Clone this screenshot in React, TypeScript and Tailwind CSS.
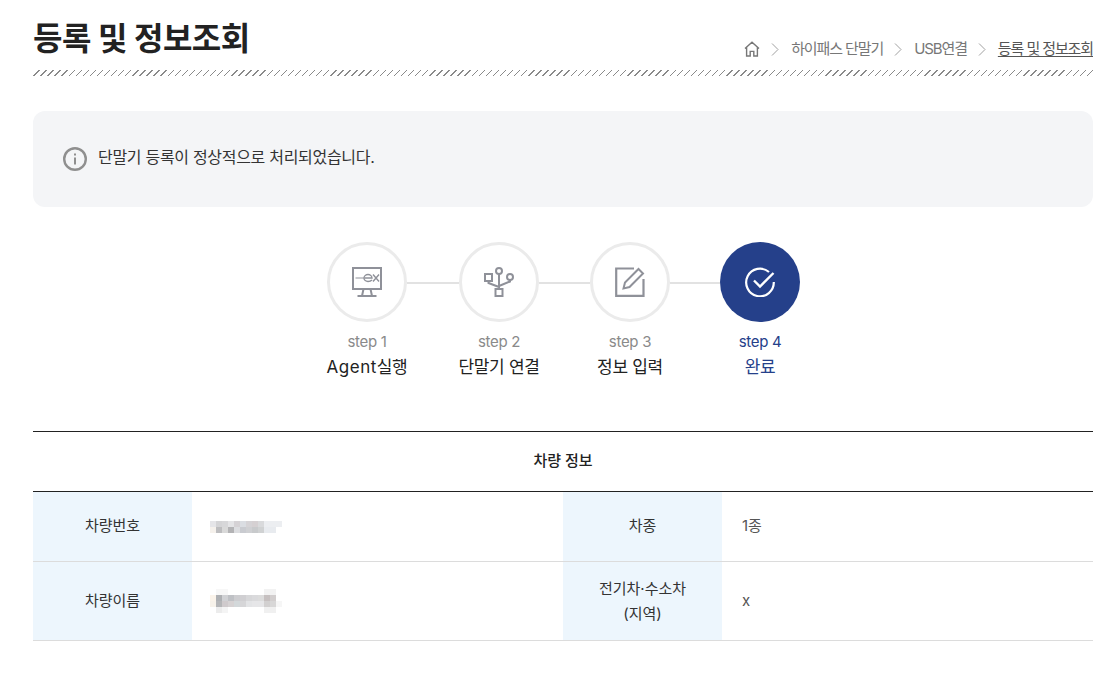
import type { ReactNode } from 'react'

const font = "font-['Inter','Noto_Sans_CJK_KR',sans-serif]"

function HomeIcon() {
  return (
    <svg width="16" height="16" viewBox="0 0 16 16" fill="none" stroke="#777" strokeWidth="1.4">
      <path d="M1 7.500 8 1.200l7 6.300M2.600 6.500V15h3.600v-4.600h3.600V15h3.600V6.500" />
    </svg>
  )
}

function Sep() {
  return (
    <svg width="8" height="13" viewBox="0 0 8 13" fill="none" stroke="#a0a0a0" strokeWidth="1" className="mx-[11px] mr-[12px]">
      <path d="M1 .5l6 6-6 6" />
    </svg>
  )
}

function InfoIcon() {
  return (
    <svg width="24" height="24" viewBox="0 0 24 24" fill="none">
      <circle cx="12" cy="12" r="10.800" stroke="#8f8f8f" strokeWidth="2.400" />
      <rect x="11" y="10.500" width="2" height="7" fill="#8f8f8f" />
      <rect x="11" y="6.500" width="2" height="2" fill="#8f8f8f" />
    </svg>
  )
}

function AgentIcon() {
  return (
    <svg width="30" height="30" viewBox="0 0 30 30" fill="none" stroke="#8f9199" strokeWidth="2">
      <rect x="1" y="1" width="28" height="21" />
      <path d="M10 29l1.500-7M20 29l-1.500-7M5.500 29h19" />
      <path d="M3.500 11H13" strokeWidth="1" />
      <path d="M13 11h7c0-2-2-3.500-4-3.500S12 9 12 11s2 3.500 4 3.500 3-.5 4-1.500M21 7.500l6 7M27 7.500l-6 7" strokeWidth="1.400" />
    </svg>
  )
}

function UsbIcon() {
  return (
    <svg width="30" height="30" viewBox="0 0 30 30" fill="none" stroke="#8f9199" strokeWidth="2">
      <circle cx="15" cy="4" r="3" />
      <circle cx="26" cy="10" r="3" />
      <rect x="1" y="7" width="7" height="7" />
      <rect x="11.500" y="22" width="7" height="7" />
      <path d="M15 7v15M4.500 14v2l10.500 4M26 13v1.500L15 19" />
    </svg>
  )
}

function EditIcon() {
  return (
    <svg width="30" height="30" viewBox="0 0 30 30" fill="none" stroke="#8f9199" strokeWidth="2.200">
      <path d="M19 1.500H1.200v27.300h27.300V12" />
      <path d="M8.500 21.500l1.500-6L23.500 2l4.500 4.500L14.500 20z" strokeWidth="2" />
    </svg>
  )
}

function CheckIcon() {
  return (
    <svg width="30" height="30" viewBox="0 0 30 30" fill="none" stroke="#fff" strokeWidth="2.200">
      <path d="M24 5A13.800 13.800 0 1 0 28.800 15" />
      <path d="M9 13.500l6 6L28.500 6" strokeWidth="2.400" />
    </svg>
  )
}

function Step({ icon, step, label, active }: { icon: ReactNode; step: string; label: ReactNode; active?: boolean }) {
  return (
    <div className="w-20 flex flex-col items-center">
      <div className={`w-20 h-20 rounded-full flex items-center justify-center ${active ? 'bg-[#25408a]' : 'bg-white border-[3px] border-[#ebebeb]'}`}>
        {icon}
      </div>
      <div className={`mt-2.5 text-[15px] leading-5 tracking-[-0.3px] whitespace-nowrap ${active ? 'text-[#25408a]' : 'text-[#8a8a8a]'}`}>{step}</div>
      <div className={`mt-[3px] text-[17px] leading-6 tracking-[-0.3px] whitespace-nowrap ${active ? 'text-[#25408a]' : 'text-[#222]'}`}>{label}</div>
    </div>
  )
}

function Line({ width }: { width: string }) {
  return <div className={`${width} h-0.5 mt-10 bg-[#e2e2e2]`} />
}

function Blur({ cells }: { cells: string[] }) {
  return (
    <div className="flex flex-col">
      {cells.map((row, i) => (
        <div key={i} className="flex">
          {row.split(' ').map((c, j) => (
            <div key={j} className="w-1.5 h-1.5" style={{ backgroundColor: c }} />
          ))}
        </div>
      ))}
    </div>
  )
}

const plateBlur = [
  '#e5e5e8 #d4d4d6 #d7d7d9 #e4e4e6 #d5d2d5 #dadde2 #d5d3d6 #d5d0d2 #d9dadc #eceef1 #eceef1 #eceef1',
  '#f5f1ec #bdbdbf #d9d9d9 #b3b3b5 #dcdde0 #c9cbd0 #cfd0d3 #c8cacc #d0d2d3 #e8ebef #e8ebef #ffffff',
]

const nameBlur = [
  '#ffffff #f7f7f7 #f7f7f7 #ffffff #ffffff #ffffff #ffffff #ffffff #ffffff #f2f2f2 #f2f2f2 #ffffff',
  '#faf3ea #aeb0b3 #d0d1d4 #bfc1c5 #cdcdd0 #d0cfd2 #d7d7d9 #dadadc #dcdcdc #c6c0c0 #d2cece #ffffff',
  '#f7f2ea #b5b6b8 #cfcacc #d6d2d3 #d3d8da #d6d6d8 #e3e4e6 #e6e6e8 #e6e6e8 #d2d0d0 #d8d7d7 #f6f6f6',
  '#ffffff #ececec #f4f4f4 #ffffff #ffffff #ffffff #ffffff #ffffff #ffffff #f0f0f0 #f0f0f0 #ffffff',
]

export default function App() {
  return (
    <div className={`${font} w-[1113px] h-[674px] bg-white overflow-hidden pl-[33px] pr-5 pt-4 text-[#333]`}>
      {/* 페이지 타이틀 */}
      <div className="flex items-end justify-between h-[46px]">
        <h1 className="text-[32px] leading-[46px] font-bold text-[#222] tracking-[-0.5px]">등록 및 정보조회</h1>
        <div className="flex items-center h-6 mb-px text-[15px] tracking-[-1.1px] text-[#777]">
          <HomeIcon />
          <Sep />
          <span>하이패스 단말기</span>
          <Sep />
          <span>USB연결</span>
          <Sep />
          <span className="underline underline-offset-2 text-[#555]">등록 및 정보조회</span>
        </div>
      </div>
      <div className="mt-2 h-1.5 bg-[repeating-linear-gradient(135deg,#fff_0,#fff_4px,#8a8a8a_4px,#8a8a8a_5px)]" />

      {/* 안내 */}
      <div className="mt-[35px] h-24 rounded-xl bg-[#f4f5f7] flex items-center pl-[30px] gap-[11px]">
        <InfoIcon />
        <p className="pb-1 text-base tracking-[-0.3px] text-[#333]">단말기 등록이 정상적으로 처리되었습니다.</p>
      </div>

      {/* 단계 */}
      <div className="mt-[35px] ml-px flex justify-center">
        <Step icon={<AgentIcon />} step="step 1" label={<><span className="tracking-[0.5px]">Agent</span>실행</>} />
        <Line width="w-[52px]" />
        <Step icon={<UsbIcon />} step="step 2" label="단말기 연결" />
        <Line width="w-[51px]" />
        <Step icon={<EditIcon />} step="step 3" label="정보 입력" />
        <Line width="w-[50px]" />
        <Step icon={<CheckIcon />} step="step 4" label="완료" active />
      </div>

      {/* 차량 정보 */}
      <div className="mt-[52px] border-t border-[#222]">
        <div className="h-[60px] flex items-center justify-center text-[15px] font-medium text-[#222] border-b border-[#222]">차량 정보</div>
        <div className="grid grid-cols-[159px_371px_159px_1fr] grid-rows-[70px_79px] text-[15px]">
          <div className="bg-[#edf6fd] border-b border-[#dcdcdc] flex items-center justify-center">차량번호</div>
          <div className="border-b border-[#dcdcdc] flex items-center pl-[18px]"><Blur cells={plateBlur} /></div>
          <div className="bg-[#edf6fd] border-b border-[#dcdcdc] flex items-center justify-center">차종</div>
          <div className="border-b border-[#dcdcdc] flex items-center pl-5 text-[#555]">1종</div>
          <div className="bg-[#edf6fd] border-b border-[#dcdcdc] flex items-center justify-center">차량이름</div>
          <div className="border-b border-[#dcdcdc] flex items-center pl-[18px]"><Blur cells={nameBlur} /></div>
          <div className="bg-[#edf6fd] border-b border-[#dcdcdc] flex items-center justify-center text-center leading-[25px]">전기차·수소차<br />(지역)</div>
          <div className="border-b border-[#dcdcdc] flex items-center pl-5 text-[#555]">x</div>
        </div>
      </div>
    </div>
  )
}
